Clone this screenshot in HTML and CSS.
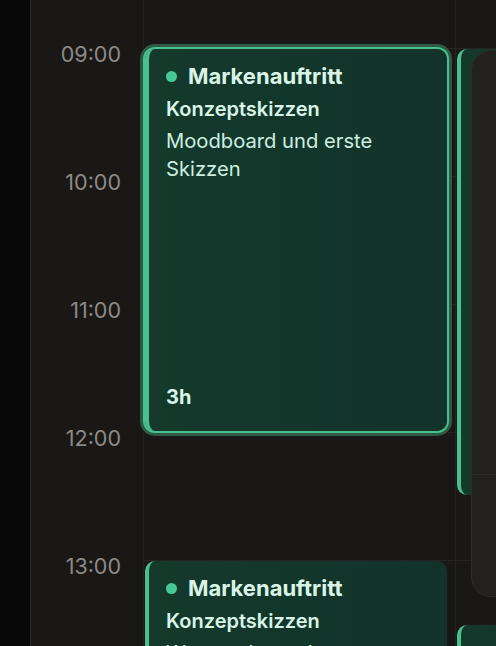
FILE: index.html
```html
<!DOCTYPE html>
<html lang="de">
<head>
<meta charset="utf-8">
<title>Kalender</title>
<link rel="stylesheet" href="styles.css">
</head>
<body>
<div class="app">
  <aside class="rail"></aside>
  <div class="times">
    <div class="time-head"></div>
    <div class="time-slot">09:00</div>
    <div class="time-slot">10:00</div>
    <div class="time-slot">11:00</div>
    <div class="time-slot">12:00</div>
    <div class="time-slot">13:00</div>
  </div>
  <div class="day">
    <div class="hour-head"></div>
    <div class="hour"></div>
    <div class="hour"></div>
    <div class="hour"></div>
    <div class="hour"></div>
    <div class="hour"></div>

    <div class="event selected" style="top: 49px; height: 382px;">
      <div class="event-title"><span class="dot"></span>Markenauftritt</div>
      <div class="event-sub">Konzeptskizzen</div>
      <div class="event-desc">Moodboard und erste Skizzen</div>
      <div class="event-dur">3h</div>
    </div>

    <div class="event" style="top: 561px; height: 382px;">
      <div class="event-title"><span class="dot"></span>Markenauftritt</div>
      <div class="event-sub">Konzeptskizzen</div>
      <div class="event-desc">Wortmarke und Bildmarke</div>
      <div class="event-dur">3h</div>
    </div>
  </div>
  <div class="day day-next">
    <div class="hour-head"></div>
    <div class="hour"></div>
    <div class="hour"></div>
    <div class="hour"></div>
    <div class="hour"></div>
    <div class="hour"></div>

    <div class="event" style="top: 49px; height: 446px;"></div>
    <div class="event" style="top: 625px; height: 382px;"></div>

    <div class="popover">
      <div class="popover-head"></div>
      <div class="popover-body"></div>
    </div>
  </div>
</div>
</body>
</html>
```

FILE: styles.css
```css
* { box-sizing: border-box; }

html, body {
  margin: 0;
  padding: 0;
  height: 100%;
  overflow: hidden;
  background: #191817;
  font-family: "Inter", "Noto Sans", sans-serif;
}

.app {
  display: flex;
  height: 646px;
  overflow: hidden;
}

.rail {
  width: 31px;
  flex: none;
  background: #080808;
  border-right: 1px solid #2c2b2a;
}

.times {
  width: 112px;
  flex: none;
  background: #191817;
  display: flex;
  flex-direction: column;
}

.time-head { height: 44px; flex: none; }

.time-slot {
  height: 128px;
  flex: none;
  line-height: 20px;
  font-size: 21.5px;
  font-weight: 400;
  color: #8d8985;
  text-align: right;
  padding-right: 22px;
}

.day {
  position: relative;
  width: 312px;
  flex: none;
  border-left: 1px solid #252423;
  display: flex;
  flex-direction: column;
  background: #191817;
}

.day-next {
  flex: 1;
  width: auto;
}

.hour-head { height: 48px; flex: none; }

.hour {
  height: 128px;
  flex: none;
  border-top: 1px solid #262524;
}

.event {
  position: absolute;
  left: 1px;
  right: 8px;
  border-radius: 10px;
  border-left: 4px solid #48c08f;
  background: linear-gradient(90deg, #143a2c 0%, #12322a 100%);
  padding: 12px 18px 20px 17px;
  display: flex;
  flex-direction: column;
  color: #d9f5e7;
}

.day-next .event { right: -40px; }

.event.selected {
  box-shadow: 0 0 0 2px #48c08f, 0 0 0 5px #2c5a45;
}

.event-title {
  display: flex;
  align-items: center;
  font-size: 22px;
  font-weight: 700;
  line-height: 30px;
}

.dot {
  width: 11px;
  height: 11px;
  border-radius: 50%;
  background: #48c896;
  margin-right: 11px;
  flex: none;
}

.event-sub {
  margin-top: 4px;
  font-size: 20px;
  font-weight: 600;
  line-height: 28px;
}

.event-desc {
  margin-top: 4px;
  font-size: 20.2px;
  font-weight: 400;
  line-height: 28px;
  color: #cdeee0;
  padding-right: 40px;
}

.event-dur {
  margin-top: auto;
  font-size: 20px;
  font-weight: 700;
  line-height: 28px;
}

.popover {
  position: absolute;
  left: 15px;
  top: 50px;
  width: 200px;
  height: 547px;
  background: #222120;
  border: 1px solid #2e2d2c;
  border-radius: 20px;
  display: flex;
  flex-direction: column;
}

.popover-head {
  height: 424px;
  border-bottom: 1px solid #2e2d2c;
  flex: none;
}

.popover-body { flex: 1; }
```
